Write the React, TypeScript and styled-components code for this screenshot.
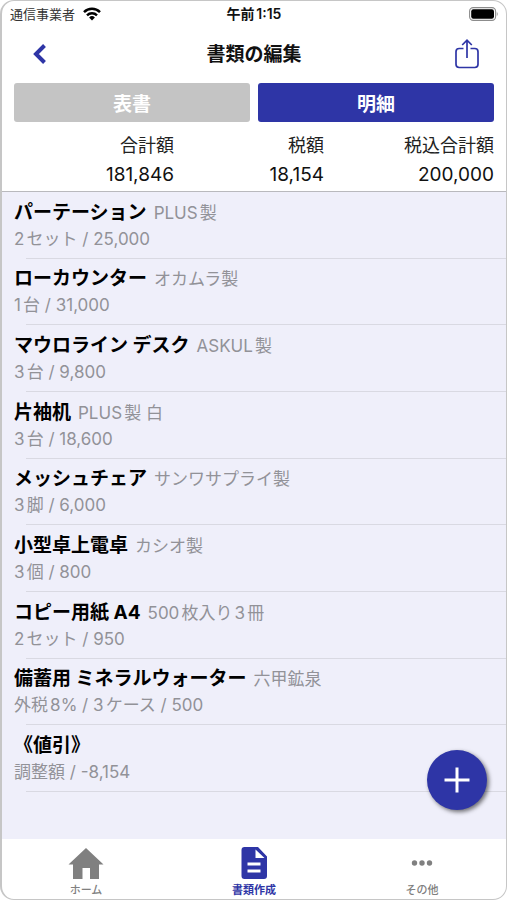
import React from "react";
import styled, { createGlobalStyle } from "styled-components";

const BLUE = "#2e35a6";
const GREY = "#808080";
const FONT = `Inter, "Noto Sans CJK JP", sans-serif`;

const GlobalStyle = createGlobalStyle`
  *, *::before, *::after { box-sizing: border-box; }
  body {
    margin: 0;
    background: #fff;
    font-family: ${FONT};
    color: #111;
    text-autospace: normal;
  }
  button { font-family: inherit; margin: 0; padding: 0; border: 0; background: none; cursor: pointer; }
`;

const Screen = styled.div`
  min-height: 100vh;
  display: flex;
  flex-direction: column;
  border: 1px solid #c6c6c6;
  border-left-width: 2px;
  border-radius: 14px;
  overflow: hidden;
  background: #fff;
`;

const StatusBar = styled.div`
  display: grid;
  grid-template-columns: 1fr auto 1fr;
  align-items: center;
  height: 26px;
  padding: 0 8px;
  line-height: 20px;
`;

const Carrier = styled.div`
  display: flex;
  align-items: center;
  gap: 8px;
  font-size: 13px;
  color: #333;
`;

const Clock = styled.time`
  font-size: 14px;
  font-weight: 600;
`;

const Battery = styled.svg`
  justify-self: end;
`;

const TitleBar = styled.header`
  display: grid;
  grid-template-columns: 1fr auto 1fr;
  align-items: center;
  height: 55px;
  padding: 0 26px;
`;

const Title = styled.h1`
  margin: 0;
  font-size: 19px;
  line-height: 28px;
  font-weight: 700;
`;

const IconButton = styled.button<{ $end?: boolean }>`
  display: flex;
  justify-self: ${(p) => (p.$end ? "end" : "start")};
`;

const Segments = styled.div`
  display: grid;
  grid-template-columns: 1fr 1fr;
  gap: 8px;
  padding: 1px 12px 0;
`;

const Segment = styled.button<{ $active?: boolean }>`
  height: 39px;
  border-radius: 3px;
  background: ${(p) => (p.$active ? BLUE : "#c4c4c4")};
  color: #fff;
  font-size: 19px;
  font-weight: 700;
`;

const SummaryWrap = styled.div`
  padding: 9px 12px 2px;
  border-bottom: 1px solid #b9b9bd;
`;

const Summary = styled.table`
  width: 100%;
  table-layout: fixed;
  border-collapse: collapse;
  text-align: right;
`;

const SummaryCol = styled.col<{ $share: number }>`
  width: ${(p) => (p.$share * 100) / 48}%;
`;

const SummaryHead = styled.th`
  padding: 0;
  font-size: 18px;
  line-height: 29px;
  font-weight: 400;
  text-align: right;
  color: #222;
`;

const SummaryCell = styled.td`
  padding: 0;
  font-size: 19px;
  line-height: 29px;
`;

const Body = styled.main`
  position: relative;
  flex: 1;
  display: flex;
  flex-direction: column;
  padding-bottom: 47px;
  background: #efeffa;
`;

const ItemList = styled.ul`
  flex: 1;
  display: grid;
  grid-auto-rows: 1fr;
  margin: 0;
  padding: 0;
  list-style: none;
`;

const Item = styled.li`
  display: flex;
  flex-direction: column;
  justify-content: center;
  padding: 7px 12px 6px;
  background: linear-gradient(#d9d9e2, #d9d9e2) 24px 100% / 100% 1px no-repeat;
`;

const ItemTitle = styled.div`
  display: flex;
  align-items: baseline;
  gap: 7px;
  line-height: 26px;
`;

const ItemName = styled.span`
  font-size: 19px;
  font-weight: 700;
  color: #000;
`;

const ItemNote = styled.span`
  font-size: 17px;
  color: #929298;
`;

const ItemDetail = styled.div`
  font-size: 17px;
  line-height: 26px;
  color: #929298;
`;

const AddButton = styled.button`
  position: absolute;
  right: 19px;
  bottom: 29px;
  display: flex;
  align-items: center;
  justify-content: center;
  width: 60px;
  height: 60px;
  border-radius: 50%;
  background: ${BLUE};
  box-shadow: 2px 2px 4px rgba(0, 0, 0, 0.55);
`;

const TabBar = styled.nav`
  display: grid;
  grid-template-columns: repeat(3, 1fr);
  height: 60px;
`;

const Tab = styled.a<{ $active?: boolean }>`
  display: flex;
  flex-direction: column;
  align-items: center;
  padding-top: 6px;
  color: ${(p) => (p.$active ? BLUE : GREY)};
  font-size: 11px;
  line-height: 16px;
  font-weight: ${(p) => (p.$active ? 700 : 500)};
  text-decoration: none;
`;

const TabIcon = styled.svg`
  width: 38px;
  height: 36px;
  margin-bottom: 1px;
`;

interface Line {
  name: string;
  note?: string;
  detail: string;
}

const items: Line[] = [
  { name: "パーテーション", note: "PLUS製", detail: "2セット / 25,000" },
  { name: "ローカウンター", note: "オカムラ製", detail: "1台 / 31,000" },
  { name: "マウロライン デスク", note: "ASKUL製", detail: "3台 / 9,800" },
  { name: "片袖机", note: "PLUS製 白", detail: "3台 / 18,600" },
  { name: "メッシュチェア", note: "サンワサプライ製", detail: "3脚 / 6,000" },
  { name: "小型卓上電卓", note: "カシオ製", detail: "3個 / 800" },
  { name: "コピー用紙 A4", note: "500枚入り3冊", detail: "2セット / 950" },
  { name: "備蓄用 ミネラルウォーター", note: "六甲鉱泉", detail: "外税8% / 3ケース / 500" },
  { name: "《値引》", detail: "調整額 / -8,154" },
];

const totals = [
  { label: "合計額", value: "181,846", share: 16 },
  { label: "税額", value: "18,154", share: 15 },
  { label: "税込合計額", value: "200,000", share: 17 },
];

export default function App() {
  return (
    <>
      <GlobalStyle />
      <Screen lang="ja">
        <StatusBar>
          <Carrier>
            通信事業者
            <svg width="18" height="14" viewBox="0 0 18 14" aria-hidden="true">
              <g fill="none" stroke="#000" strokeWidth="2.5">
                <path d="M1 5.1a11.5 11.5 0 0 1 16 0" />
                <path d="M4 8.3a7.3 7.3 0 0 1 10 0" />
              </g>
              <path d="M9 13.4 6.1 10.5a4.2 4.2 0 0 1 5.8 0Z" fill="#000" />
            </svg>
          </Carrier>
          <Clock>午前1:15</Clock>
          <Battery width="30" height="14" viewBox="0 0 30 14" aria-hidden="true">
            <rect x="1.6" y="0.6" width="26" height="12.8" rx="3.6" fill="none" stroke="#8c8c8c" strokeWidth="1.1" />
            <rect x="3.2" y="2.2" width="22.8" height="9.6" rx="2.2" fill="#000" />
            <path d="M28.800 5v4c1.200-.5 1.200-3.500 0-4Z" fill="#8c8c8c" />
          </Battery>
        </StatusBar>

        <TitleBar>
          <IconButton type="button" aria-label="戻る">
            <svg width="22" height="24" viewBox="0 0 22 24" aria-hidden="true">
              <path d="M16.500 2.500 8 11l8.500 8.500" fill="none" stroke={BLUE} strokeWidth="4" />
            </svg>
          </IconButton>
          <Title>書類の編集</Title>
          <IconButton type="button" $end aria-label="共有">
            <svg width="26" height="34" viewBox="0 0 26 34" fill="none" stroke={BLUE} strokeWidth="1.7" aria-hidden="true">
              <path d="M9.500 10.500H5.200A3.200 3.200 0 0 0 2 13.700v12.600a3.200 3.200 0 0 0 3.200 3.200h15.600a3.200 3.200 0 0 0 3.200-3.200V13.700a3.200 3.200 0 0 0-3.200-3.200h-4.300" />
              <path d="M13 20V2.500M8.200 7 13 2.200 17.800 7" />
            </svg>
          </IconButton>
        </TitleBar>

        <Segments>
          <Segment type="button" aria-pressed="false">表書</Segment>
          <Segment type="button" $active aria-pressed="true">明細</Segment>
        </Segments>

        <SummaryWrap>
          <Summary>
            <colgroup>
              {totals.map((t) => <SummaryCol key={t.label} $share={t.share} />)}
            </colgroup>
            <thead>
              <tr>{totals.map((t) => <SummaryHead key={t.label} scope="col">{t.label}</SummaryHead>)}</tr>
            </thead>
            <tbody>
              <tr>{totals.map((t) => <SummaryCell key={t.label}>{t.value}</SummaryCell>)}</tr>
            </tbody>
          </Summary>
        </SummaryWrap>

        <Body>
          <ItemList>
            {items.map((item) => (
              <Item key={item.name}>
                <ItemTitle>
                  <ItemName>{item.name}</ItemName>
                  {item.note && <ItemNote>{item.note}</ItemNote>}
                </ItemTitle>
                <ItemDetail>{item.detail}</ItemDetail>
              </Item>
            ))}
          </ItemList>
          <AddButton type="button" aria-label="追加">
            <svg width="26" height="26" viewBox="0 0 26 26" stroke="#fff" strokeWidth="3" aria-hidden="true">
              <path d="M13 .5v25M.5 13h25" />
            </svg>
          </AddButton>
        </Body>

        <TabBar>
          <Tab href="#home">
            <TabIcon viewBox="0 0 38 36" aria-hidden="true">
              <path d="M19 3 36.500 19.500H32V34H23V23H15.500V34H6V19.500H1.500Z" fill="currentColor" />
            </TabIcon>
            ホーム
          </Tab>
          <Tab href="#documents" $active aria-current="page">
            <TabIcon viewBox="0 0 38 36" aria-hidden="true">
              <path
                fillRule="evenodd"
                fill="currentColor"
                d="M9.500 2H23l9 9.500V31a3 3 0 0 1-3 3H9.500a3 3 0 0 1-3-3V5a3 3 0 0 1 3-3ZM20.500 4.500V13H29.500ZM12.500 17.500v3h13v-3ZM12.500 24.500v3h13v-3Z"
              />
            </TabIcon>
            書類作成
          </Tab>
          <Tab href="#more">
            <TabIcon viewBox="0 0 38 36" fill="currentColor" aria-hidden="true">
              <circle cx="11.500" cy="18" r="2.700" />
              <circle cx="19" cy="18" r="2.700" />
              <circle cx="26.500" cy="18" r="2.700" />
            </TabIcon>
            その他
          </Tab>
        </TabBar>
      </Screen>
    </>
  );
}
